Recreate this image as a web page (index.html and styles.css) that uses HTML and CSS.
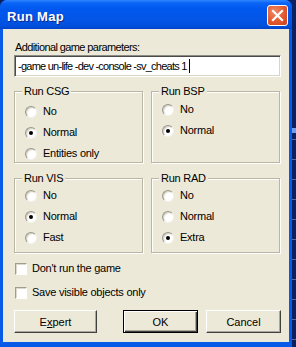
FILE: index.html
```html
<!DOCTYPE html>
<html>
<head>
<meta charset="utf-8">
<link rel="stylesheet" href="styles.css">
</head>
<body>
<div class="screen">
  <div class="window">
    <div class="titlebar">
      <span class="title">Run Map</span>
      <span class="close"><svg width="13" height="13" viewBox="0 0 13 13"><path d="M2 2 L11 11 M11 2 L2 11" stroke="#fff" stroke-width="2.2" stroke-linecap="square"/></svg></span>
    </div>
    <div class="client">
      <div class="label">Additional game parameters:</div>
      <div class="textbox"><span class="value">-game un-life -dev -console -sv_cheats 1</span><span class="caret"></span></div>
      <div class="groups">
        <div class="group g-top g-csg">
          <span class="legend">Run CSG</span>
          <div class="opt"><span class="radio"></span>No</div>
          <div class="opt"><span class="radio on"></span>Normal</div>
          <div class="opt"><span class="radio"></span>Entities only</div>
        </div>
        <div class="group g-top g-bsp">
          <span class="legend">Run BSP</span>
          <div class="opt"><span class="radio"></span>No</div>
          <div class="opt"><span class="radio on"></span>Normal</div>
        </div>
        <div class="group g-bot">
          <span class="legend">Run VIS</span>
          <div class="opt"><span class="radio"></span>No</div>
          <div class="opt"><span class="radio on"></span>Normal</div>
          <div class="opt"><span class="radio"></span>Fast</div>
        </div>
        <div class="group g-bot">
          <span class="legend">Run RAD</span>
          <div class="opt"><span class="radio"></span>No</div>
          <div class="opt"><span class="radio"></span>Normal</div>
          <div class="opt"><span class="radio on"></span>Extra</div>
        </div>
      </div>
      <div class="check check-first"><span class="box"></span>Don't run the game</div>
      <div class="check"><span class="box"></span>Save visible objects only</div>
      <div class="buttons">
        <span class="btn btn-expert">E<u>x</u>pert</span>
        <span class="btn btn-default">OK</span>
        <span class="btn">Cancel</span>
      </div>
    </div>
  </div>
  <div class="behind"></div>
</div>
</body>
</html>
```
FILE: styles.css
```css
* { box-sizing: border-box; }
html, body { margin: 0; padding: 0; }
body {
  width: 296px;
  height: 347px;
  overflow: hidden;
  background: #0b1f63;
  font-family: "Liberation Sans", Arial, sans-serif;
  font-size: 11px;
  letter-spacing: -0.25px;
  color: #000;
}
.screen {
  display: flex;
  width: 296px;
  height: 347px;
}
.window {
  width: 292px;
  height: 347px;
  display: flex;
  flex-direction: column;
  background: #0a5ae8;
  border-radius: 7px 7px 0 0;
  overflow: hidden;
}
.behind {
  width: 4px;
  height: 347px;
  background:
    linear-gradient(#0b1f63 0, #0b1f63 128px, #6f9cf0 128px, #6f9cf0 133px, transparent 133px),
    repeating-linear-gradient(#0b1f63 0, #0b1f63 19px, #5a6a9a 19px, #5a6a9a 20px),
    #0b1f63;
}
.titlebar {
  height: 29px;
  flex: none;
  display: flex;
  align-items: center;
  justify-content: space-between;
  padding: 1px 4px 0 7px;
  background: linear-gradient(#2f86ff 0, #0a64f6 3px, #0058ee 9px, #0455e6 20px, #0050dc 26px, #0143c9 29px);
}
.title {
  color: #fff;
  font-weight: bold;
  font-size: 13px;
  letter-spacing: 0.3px;
  text-shadow: 1px 1px 0 #0a2a8a;
  margin-top: 3px;
}
.close {
  width: 21px;
  height: 21px;
  border: 1px solid #fff;
  border-radius: 3px;
  background: radial-gradient(circle at 35% 30%, #f08a66 0, #e2582e 55%, #c94220 100%);
  display: flex;
  align-items: center;
  justify-content: center;
}
.client {
  flex: 1;
  margin: 0 3px 5px 3px;
  background: #ece9d8;
  padding: 12px 8px 0 11px;
  display: flex;
  flex-direction: column;
}
.label {
  height: 13px;
  line-height: 13px;
  padding-left: 1px;
  letter-spacing: -0.6px;
}
.textbox {
  margin-top: 1px;
  height: 22px;
  border: 1px solid;
  border-color: #8c8c86 #fff #fff #8c8c86;
  box-shadow: inset 1px 1px 0 #4a4a46, inset -1px -1px 0 #d8d5c6;
  background: #fff;
  display: flex;
  align-items: center;
  padding-left: 3px;
  white-space: nowrap;
  letter-spacing: -0.75px;
}
.caret {
  width: 1px;
  height: 14px;
  background: #000;
  margin-left: 2px;
}
.groups {
  display: grid;
  grid-template-columns: 129px 129px;
  column-gap: 8px;
  row-gap: 9px;
  margin-top: 8px;
}
.group {
  position: relative;
  border: 1px solid #b9b6a5;
  box-shadow: inset 1px 1px 0 #fff, 1px 1px 0 #fff;
  margin-top: 6px;
  padding: 13px 0 0 10px;
  display: flex;
  flex-direction: column;
  gap: 8px;
}
.g-top { height: 72px; }
.g-bsp { padding-top: 11px; }
.g-bot { height: 75px; padding-top: 10px; }
.legend {
  position: absolute;
  left: 7px;
  top: -7px;
  background: #ece9d8;
  padding: 0 2px;
  line-height: 13px;
}
.opt {
  height: 13px;
  line-height: 13px;
  display: flex;
  align-items: center;
}
.radio {
  width: 12px;
  height: 12px;
  border-radius: 50%;
  margin-right: 6px;
  background: radial-gradient(circle at 65% 65%, #fff 0, #fff 45%, #e3e1d6 80%);
  border: 1px solid;
  border-color: #9a9890 #f4f3ee #f4f3ee #9a9890;
  box-shadow: inset 1px 1px 0 #d6d3c4;
  display: flex;
  align-items: center;
  justify-content: center;
}
.radio.on::after {
  content: "";
  width: 4px;
  height: 4px;
  border-radius: 50%;
  background: #000;
}
.check {
  height: 13px;
  line-height: 13px;
  display: flex;
  align-items: center;
  padding-left: 1px;
  margin-top: 11px;
}
.check-first { margin-top: 9px; }
.box {
  width: 12px;
  height: 12px;
  background: #fff;
  border: 1px solid;
  border-color: #a09d90 #fff #fff #a09d90;
  box-shadow: inset 1px 1px 0 #dcd9cb;
  margin-right: 5px;
}
.buttons {
  display: flex;
  margin-top: 11px;
  gap: 8px;
}
.btn {
  width: 75px;
  height: 23px;
  display: flex;
  align-items: center;
  justify-content: center;
  background: #ece9d8;
  border: 1px solid;
  border-color: #fff #404040 #404040 #fff;
  box-shadow: inset -1px -1px 0 #aca899;
  letter-spacing: 0;
}
.btn-expert { width: 83px; margin-right: auto; }
.btn-default {
  border: 1px solid #000;
  box-shadow: inset 1px 1px 0 #fff, inset -1px -1px 0 #404040, inset -2px -2px 0 #aca899;
}
```
